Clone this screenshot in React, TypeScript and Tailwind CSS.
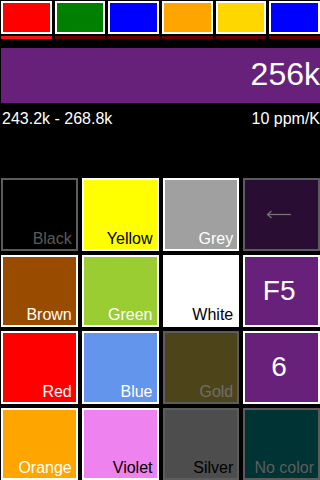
import React from 'react';

type Band = { color: string; active?: boolean };

const bands: Band[] = [
  { color: 'bg-[#ff0000]', active: true },
  { color: 'bg-[#008000]' },
  { color: 'bg-[#0000ff]' },
  { color: 'bg-[#ffa500]' },
  { color: 'bg-[#ffd700]' },
  { color: 'bg-[#0000ff]' },
];

type Key = { label?: string; bg: string; border: string; text: string; big?: boolean; arrow?: boolean };

const keys: Key[] = [
  { label: 'Black', bg: 'bg-black', border: 'border-[#5c5c5c]', text: 'text-[#5a5a5a]' },
  { label: 'Yellow', bg: 'bg-[#ffff00]', border: 'border-white', text: 'text-black' },
  { label: 'Grey', bg: 'bg-[#a0a0a0]', border: 'border-white', text: 'text-white' },
  { bg: 'bg-[#2a0d33]', border: 'border-[#5c5c5c]', text: 'text-[#777]', arrow: true },
  { label: 'Brown', bg: 'bg-[#994c00]', border: 'border-white', text: 'text-white' },
  { label: 'Green', bg: 'bg-[#9acd32]', border: 'border-white', text: 'text-white' },
  { label: 'White', bg: 'bg-white', border: 'border-white', text: 'text-black' },
  { label: 'F5', bg: 'bg-[#68217a]', border: 'border-white', text: 'text-white', big: true },
  { label: 'Red', bg: 'bg-[#ff0000]', border: 'border-white', text: 'text-white' },
  { label: 'Blue', bg: 'bg-[#6495ed]', border: 'border-white', text: 'text-white' },
  { label: 'Gold', bg: 'bg-[#4d441a]', border: 'border-[#5c5c5c]', text: 'text-[#6e6e6e]' },
  { label: '6', bg: 'bg-[#68217a]', border: 'border-white', text: 'text-white', big: true },
  { label: 'Orange', bg: 'bg-[#ffa500]', border: 'border-white', text: 'text-white' },
  { label: 'Violet', bg: 'bg-[#ee82ee]', border: 'border-white', text: 'text-black' },
  { label: 'Silver', bg: 'bg-[#4d4d4d]', border: 'border-[#5c5c5c]', text: 'text-black' },
  { label: 'No color', bg: 'bg-[#003333]', border: 'border-[#5c5c5c]', text: 'text-[#5e5e5e]' },
];

const KeyCell: React.FC<{ k: Key }> = ({ k }) => {
  if (k.arrow) {
    return (
      <div className={`flex items-center justify-center border-2 ${k.border} ${k.bg}`}>
        <svg width="26" height="9" viewBox="0 0 26 9" className="-ml-[6px]">
          <path d="M1 4.5 H25" stroke="#777" strokeWidth="1.2" />
          <path d="M5.5 1 L1.5 4.5 L5.5 8" stroke="#777" strokeWidth="1.2" fill="none" />
        </svg>
      </div>
    );
  }
  if (k.big) {
    return (
      <div className={`flex items-center justify-center border-2 ${k.border} ${k.bg} ${k.text} pr-[5px] text-[28px] leading-none`}>
        {k.label}
      </div>
    );
  }
  return (
    <div className={`flex items-end justify-end border-2 ${k.border} ${k.bg} ${k.text} pr-[4px] pb-[1px] text-[16px] leading-[18px]`}>
      {k.label}
    </div>
  );
};

export default function App() {
  return (
    <div className="w-[320px] h-[480px] overflow-hidden bg-black text-white font-['Liberation_Sans',Arial,sans-serif]">
      <div className="grid grid-cols-6 gap-x-[3px] pl-[1px] pt-[1px]">
        {bands.map((b, i) => (
          <div key={i} className="flex flex-col">
            <div className={`h-[33px] border-2 border-white ${b.color}`} />
            <div className={`mt-[2px] h-[3px] ${b.active ? 'bg-[#ff1010]' : 'bg-[#660000]'}`} />
          </div>
        ))}
      </div>

      <div className="mt-[9px] ml-[1px] h-[55px] bg-[#68217a] flex items-center justify-end pb-[4px] text-[32px] leading-none">
        256k
      </div>

      <div className="mt-[7px] flex justify-between pl-[2px] text-[16px] leading-[18px]">
        <span>243.2k - 268.8k</span>
        <span>10 ppm/K</span>
      </div>

      <div className="mt-[50px] grid grid-cols-4 auto-rows-[72.5px] gap-[4px] pl-[1px]">
        {keys.map((k, i) => (
          <KeyCell key={i} k={k} />
        ))}
      </div>
    </div>
  );
}
